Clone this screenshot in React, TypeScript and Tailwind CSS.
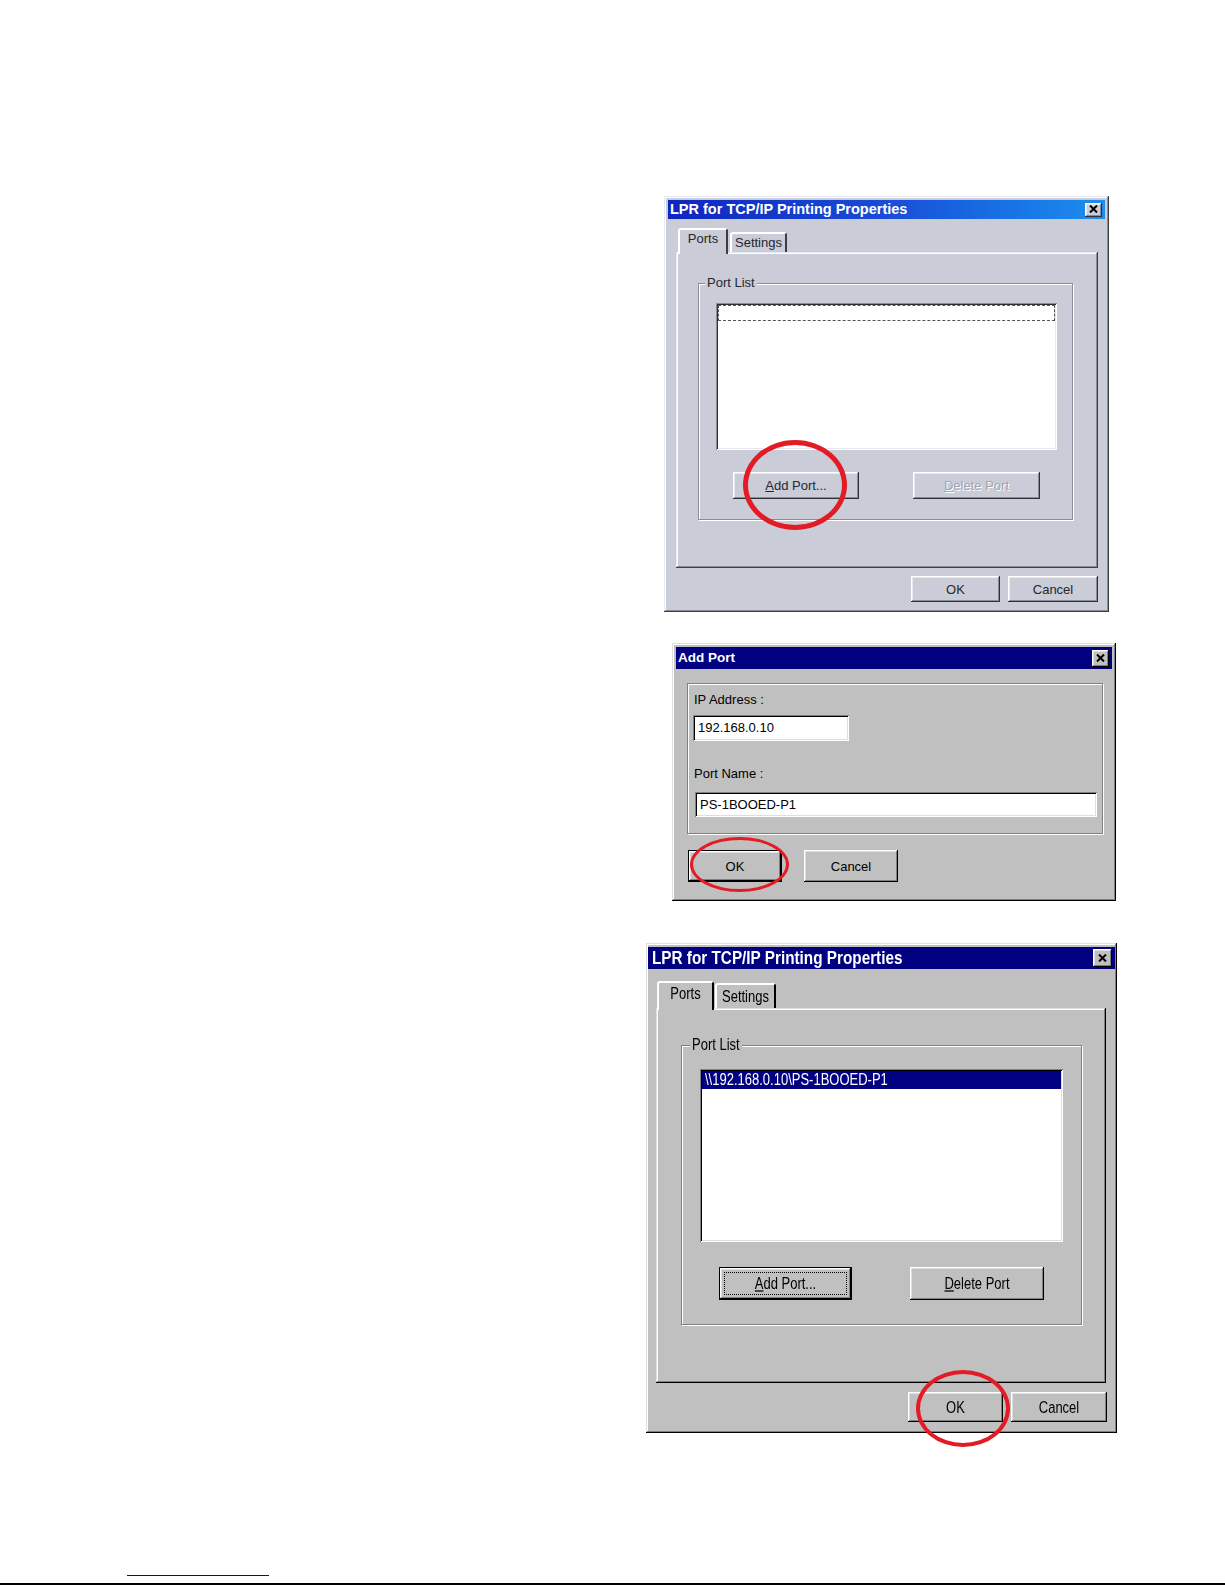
import { ReactNode } from 'react';

type Tone = 'lav' | 'std';

const RAISED: Record<Tone, string> = {
  lav: 'shadow-[inset_-1px_-1px_#3c3e46,inset_1px_1px_#e6e8f0,inset_-2px_-2px_#8a8d98,inset_2px_2px_#ffffff]',
  std: 'shadow-[inset_-1px_-1px_#000000,inset_1px_1px_#dfdfdf,inset_-2px_-2px_#808080,inset_2px_2px_#ffffff]',
};

const BUTTON: Record<Tone, string> = {
  lav: 'shadow-[inset_-1px_-1px_#2e3038,inset_1px_1px_#ffffff,inset_-2px_-2px_#8a8d98,inset_2px_2px_#e6e8f0]',
  std: 'shadow-[inset_-1px_-1px_#000000,inset_1px_1px_#ffffff,inset_-2px_-2px_#808080,inset_2px_2px_#dfdfdf]',
};

const SUNKEN: Record<Tone, string> = {
  lav: 'shadow-[inset_1px_1px_#8a8d98,inset_-1px_-1px_#ffffff,inset_2px_2px_#2e3038,inset_-2px_-2px_#e6e8f0]',
  std: 'shadow-[inset_1px_1px_#808080,inset_-1px_-1px_#ffffff,inset_2px_2px_#000000,inset_-2px_-2px_#dfdfdf]',
};

const ETCHED: Record<Tone, string> = {
  lav: 'border border-[#8a8d98] shadow-[1px_1px_0_#ffffff,inset_1px_1px_0_#ffffff]',
  std: 'border border-[#808080] shadow-[1px_1px_0_#ffffff,inset_1px_1px_0_#ffffff]',
};

const TAB_BG: Record<Tone, string> = {
  lav: 'bg-[#caccd7] border-r-[#3c3e46]',
  std: 'bg-[#c0c0c0] border-r-[#000000]',
};

// tall, narrow text of the third screenshot
const Tall = ({ children }: { children: ReactNode }) => (
  <span className="inline-block scale-y-[1.25]">{children}</span>
);

interface BtnProps {
  tone: Tone;
  className?: string;
  children: ReactNode;
  isDefault?: boolean;
  focus?: boolean;
  disabled?: boolean;
}

const Btn = ({ tone, className = '', children, isDefault, focus, disabled }: BtnProps) => (
  <div
    className={`relative flex items-center justify-center ${BUTTON[tone]} ${
      isDefault ? 'border border-black' : ''
    } ${
      disabled
        ? 'text-[#a2a5b0] [text-shadow:1px_1px_0_#ffffff]'
        : ''
    } ${className}`}
  >
    {focus && <div className="absolute inset-[4px] border border-dotted border-black" />}
    <span className="leading-none">{children}</span>
  </div>
);

const CloseBtn = ({ tone, className }: { tone: Tone; className: string }) => (
  <div
    className={`flex items-center justify-center ${
      tone === 'lav' ? 'bg-[#caccd7]' : 'bg-[#c0c0c0]'
    } ${BUTTON[tone]} ${className}`}
  >
    <svg width="9" height="8" viewBox="0 0 9 8" className="mb-[1px]">
      <path d="M1 0.5 L8 7.5 M8 0.5 L1 7.5" stroke="black" strokeWidth="2" />
    </svg>
  </div>
);

const Tab = ({
  tone,
  selected,
  className,
  children,
}: {
  tone: Tone;
  selected?: boolean;
  className: string;
  children: ReactNode;
}) => (
  <div
    className={`flex items-start justify-center rounded-t-[3px] border-l-2 border-r-2 border-t-2 border-l-white border-t-white leading-[16px] ${
      TAB_BG[tone]
    } ${selected ? 'relative z-10 -mb-[2px]' : ''} ${className}`}
  >
    {children}
  </div>
);

const Ellipse = ({ className }: { className: string }) => (
  <div className={`pointer-events-none absolute z-20 rounded-[50%] border-[#e31b24] ${className}`} />
);

const FirstDialog = () => (
  <div
    className={`relative ml-[664px] flex h-[416px] w-[445px] flex-col bg-[#caccd7] p-[4px] text-[13px] text-[#26272c] ${RAISED.lav}`}
  >
    <div className="flex h-[19px] items-center justify-between bg-linear-to-r from-[#1024c0] via-[#1a4cd8] to-[#1e8eee] pl-[2px] pr-[3px]">
      <span className="text-[14.5px] font-bold leading-none text-white">
        LPR for TCP/IP Printing Properties
      </span>
      <CloseBtn tone="lav" className="h-[14px] w-[17px]" />
    </div>
    <div className="flex flex-col pl-[8px] pr-[7px] pt-[9px]">
      <div className="flex h-[24px] items-end pl-[2px]">
        <Tab tone="lav" selected className="h-[26px] w-[50px] pt-[1px]">
          Ports
        </Tab>
        <Tab tone="lav" className="ml-[2px] h-[20px] w-[57px] pt-[1px]">
          Settings
        </Tab>
      </div>
      <div className={`h-[316px] pl-[22px] pt-[31px] ${RAISED.lav}`}>
        <div className={`relative h-[237px] w-[375px] pl-[17px] pt-[19px] ${ETCHED.lav}`}>
          <span className="absolute -top-[9px] left-[6px] bg-[#caccd7] px-[2px] leading-[16px]">
            Port List
          </span>
          <div className={`h-[147px] w-[341px] bg-white p-[2px] ${SUNKEN.lav}`}>
            <div className="h-[16px] border border-dashed border-[#555]" />
          </div>
          <div className="mt-[22px] flex">
            <Btn tone="lav" className="ml-[17px] h-[27px] w-[126px]">
              <u>A</u>dd Port...
            </Btn>
            <Btn tone="lav" disabled className="ml-[54px] h-[27px] w-[127px]">
              <u>D</u>elete Port
            </Btn>
          </div>
        </div>
      </div>
      <div className="mt-[8px] flex justify-end gap-[8px]">
        <Btn tone="lav" className="h-[26px] w-[89px]">
          OK
        </Btn>
        <Btn tone="lav" className="h-[26px] w-[90px]">
          Cancel
        </Btn>
      </div>
    </div>
    <Ellipse className="left-[79px] top-[244px] h-[90px] w-[104px] border-[5px]" />
  </div>
);

const AddPortDialog = () => (
  <div
    className={`relative ml-[672px] mt-[31px] flex h-[258px] w-[444px] flex-col bg-[#c0c0c0] p-[4px] text-[13px] text-black ${RAISED.std}`}
  >
    <div className="flex h-[22px] items-center justify-between bg-[#000080] pl-[2px] pr-[3px]">
      <span className="text-[13.5px] font-bold leading-none text-white">Add Port</span>
      <CloseBtn tone="std" className="h-[17px] w-[17px]" />
    </div>
    <div className={`ml-[11px] mt-[14px] h-[151px] w-[416px] pl-[6px] pt-[8px] ${ETCHED.std}`}>
      <div className="leading-[16px]">IP Address :</div>
      <div
        className={`-ml-[1px] mt-[7px] flex h-[26px] w-[156px] items-center bg-white pl-[5px] ${SUNKEN.std}`}
      >
        192.168.0.10
      </div>
      <div className="mt-[25px] leading-[16px]">Port Name :</div>
      <div
        className={`ml-[1px] mt-[10px] flex h-[25px] w-[402px] items-center bg-white pl-[5px] ${SUNKEN.std}`}
      >
        PS-1BOOED-P1
      </div>
    </div>
    <div className="mt-[16px] flex">
      <Btn tone="std" isDefault className="ml-[12px] h-[32px] w-[94px]">
        OK
      </Btn>
      <Btn tone="std" className="ml-[22px] h-[32px] w-[94px]">
        Cancel
      </Btn>
    </div>
    <Ellipse className="left-[18px] top-[194px] h-[55px] w-[99px] border-[3px]" />
  </div>
);

const ResultDialog = () => (
  <div
    className={`relative ml-[646px] mt-[42px] flex h-[490px] w-[471px] flex-col bg-[#c0c0c0] px-[2px] pt-[4px] text-[13px] text-black ${RAISED.std}`}
  >
    <div className="flex h-[22px] items-center justify-between bg-[#000080] pl-[4px] pr-[3px]">
      <span className="text-[15.3px] font-bold leading-none text-white">
        <span className="inline-block scale-y-[1.2]">LPR for TCP/IP Printing Properties</span>
      </span>
      <CloseBtn tone="std" className="h-[18px] w-[19px]" />
    </div>
    <div className="flex flex-col pl-[8px] pr-[9px] pt-[12px]">
      <div className="flex h-[27px] items-end">
        <Tab tone="std" selected className="ml-[1px] h-[29px] w-[57px] pt-[3px]">
          <Tall>Ports</Tall>
        </Tab>
        <Tab tone="std" className="ml-[1px] h-[25px] w-[61px] pt-[4px]">
          <Tall>Settings</Tall>
        </Tab>
      </div>
      <div className={`h-[375px] pl-[25px] pt-[37px] ${RAISED.std}`}>
        <div className={`relative h-[280px] w-[401px] pl-[18px] pt-[23px] ${ETCHED.std}`}>
          <span className="absolute -top-[9px] left-[8px] bg-[#c0c0c0] px-[2px] leading-[16px]">
            <Tall>Port List</Tall>
          </span>
          <div className={`h-[173px] w-[363px] bg-white p-[2px] ${SUNKEN.std}`}>
            <div className="flex h-[18px] items-center bg-[#000080] pl-[3px] text-white">
              <Tall>\\192.168.0.10\PS-1BOOED-P1</Tall>
            </div>
          </div>
          <div className="mt-[25px] flex">
            <Btn tone="std" isDefault focus className="ml-[19px] h-[33px] w-[133px]">
              <Tall>
                <u>A</u>dd Port...
              </Tall>
            </Btn>
            <Btn tone="std" className="ml-[58px] h-[33px] w-[134px]">
              <Tall>
                <u>D</u>elete Port
              </Tall>
            </Btn>
          </div>
        </div>
      </div>
      <div className="-mr-[1px] mt-[9px] flex justify-end gap-[8px]">
        <Btn tone="std" className="h-[30px] w-[95px]">
          <Tall>OK</Tall>
        </Btn>
        <Btn tone="std" className="h-[30px] w-[96px]">
          <Tall>Cancel</Tall>
        </Btn>
      </div>
    </div>
    <Ellipse className="left-[270px] top-[427px] h-[77px] w-[94px] border-[4px]" />
  </div>
);

export default function App() {
  return (
    <div className="relative flex h-[1585px] w-[1225px] flex-col overflow-hidden bg-white font-['Liberation_Sans',Arial,sans-serif]">
      <div className="pt-[196px]">
        <FirstDialog />
        <AddPortDialog />
        <ResultDialog />
      </div>
      <footer className="mt-auto">
        <div className="ml-[127px] h-px w-[142px] bg-[#0000d0]" />
        <div className="mt-[7px] h-[2px] w-full bg-black" />
      </footer>
    </div>
  );
}
